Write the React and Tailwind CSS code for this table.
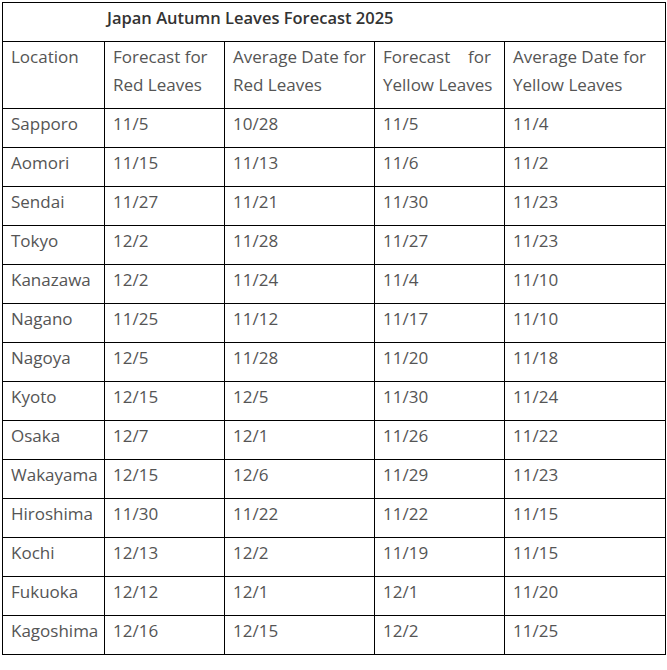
const ROWS = [
  ["Sapporo", "11/5", "10/28", "11/5", "11/4"],
  ["Aomori", "11/15", "11/13", "11/6", "11/2"],
  ["Sendai", "11/27", "11/21", "11/30", "11/23"],
  ["Tokyo", "12/2", "11/28", "11/27", "11/23"],
  ["Kanazawa", "12/2", "11/24", "11/4", "11/10"],
  ["Nagano", "11/25", "11/12", "11/17", "11/10"],
  ["Nagoya", "12/5", "11/28", "11/20", "11/18"],
  ["Kyoto", "12/15", "12/5", "11/30", "11/24"],
  ["Osaka", "12/7", "12/1", "11/26", "11/22"],
  ["Wakayama", "12/15", "12/6", "11/29", "11/23"],
  ["Hiroshima", "11/30", "11/22", "11/22", "11/15"],
  ["Kochi", "12/13", "12/2", "11/19", "11/15"],
  ["Fukuoka", "12/12", "12/1", "12/1", "11/20"],
  ["Kagoshima", "12/16", "12/15", "12/2", "11/25"],
];

const cell = "border border-black pl-2 pr-1 pt-[1px] pb-[9px] align-top text-left font-normal";

export default function App() {
  return (
    <div className="bg-white min-h-[670px] pt-[2px] pl-[2px] font-['Open_Sans',sans-serif] text-[17px] leading-[28px] text-[#555]">
      <table className="table-fixed border-collapse w-[663px]">
        <colgroup>
          <col className="w-[102px]" />
          <col className="w-[120px]" />
          <col className="w-[150px]" />
          <col className="w-[130px]" />
          <col className="w-[161px]" />
        </colgroup>
        <thead>
          <tr>
            <th colSpan={5} className={`${cell} pl-[104px] !font-semibold !text-[16.5px] text-[#333]`}>
              Japan Autumn Leaves Forecast 2025
            </th>
          </tr>
          <tr>
            <th className={cell}>Location</th>
            <th className={cell}>Forecast for Red Leaves</th>
            <th className={cell}>Average Date for Red Leaves</th>
            <th className={cell}>
              <span className="flex justify-between w-[108px]">
                <span>Forecast</span>
                <span>for</span>
              </span>
              <span className="block whitespace-nowrap">Yellow Leaves</span>
            </th>
            <th className={cell}>Average Date for Yellow Leaves</th>
          </tr>
        </thead>
        <tbody>
          {ROWS.map((r) => (
            <tr key={r[0]}>
              {r.map((v, i) => (
                <td key={i} className={cell}>{v}</td>
              ))}
            </tr>
          ))}
        </tbody>
      </table>
    </div>
  );
}
